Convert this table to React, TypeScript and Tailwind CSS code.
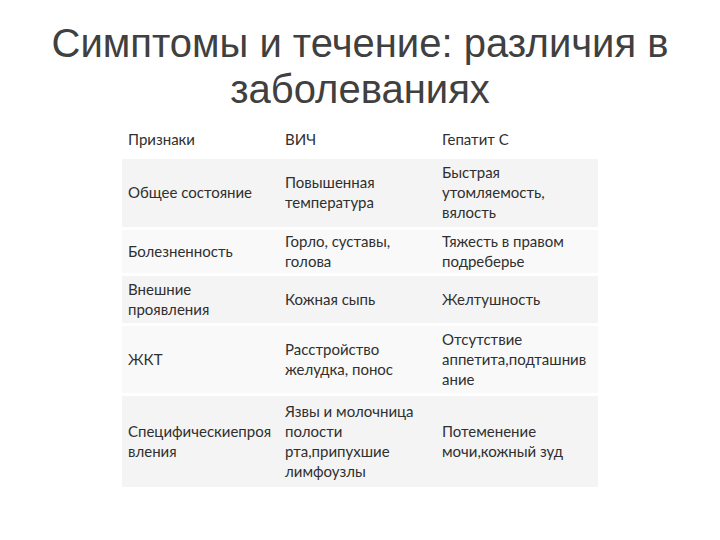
import React from 'react'

const ROWS: { h: string; bg: string; cells: string[][] }[] = [
  { h: 'h-[68px]', bg: 'bg-[#f4f4f4]', cells: [['Общее состояние'], ['Повышенная', 'температура'], ['Быстрая', 'утомляемость,', 'вялость']] },
  { h: 'h-[43px]', bg: 'bg-[#f9f9f9]', cells: [['Болезненность'], ['Горло, суставы,', 'голова'], ['Тяжесть в правом', 'подреберье']] },
  { h: 'h-[47px]', bg: 'bg-[#f4f4f4]', cells: [['Внешние', 'проявления'], ['Кожная сыпь'], ['Желтушность']] },
  { h: 'h-[67px]', bg: 'bg-[#f9f9f9]', cells: [['ЖКТ'], ['Расстройство', 'желудка, понос'], ['Отсутствие', 'аппетита,подташнив', 'ание']] },
  { h: 'h-[91px]', bg: 'bg-[#f4f4f4]', cells: [['Специфическиепроя', 'вления'], ['Язвы и молочница', 'полости', 'рта,припухшие', 'лимфоузлы'], ['Потеменение', 'мочи,кожный зуд']] },
]

function Cell({ lines }: { lines: string[] }) {
  return (
    <div className="flex flex-col justify-center pl-[6px] pb-[2px]">
      {lines.map((l, i) => (
        <span key={i} className="leading-[20px] whitespace-nowrap">
          {l}
        </span>
      ))}
    </div>
  )
}

export default function App() {
  return (
    <div className="w-[720px] h-[540px] bg-white overflow-hidden">
      <h1
        className="pt-[20px] text-center text-[40px] leading-[46px] text-[#404040] font-normal"
        style={{ fontFamily: '"Liberation Sans", Arial, sans-serif' }}
      >
        Симптомы и течение: различия в
        <br />
        заболеваниях
      </h1>
      <div
        className="mt-[12px] ml-[122px] w-[476px] flex flex-col gap-[3px] text-[15px] text-[#2f2f2f]"
        style={{ fontFamily: 'Lato, "Open Sans", sans-serif' }}
      >
        <div className="grid grid-cols-[157px_157px_162px] h-[32px]">
          <Cell lines={['Признаки']} />
          <Cell lines={['ВИЧ']} />
          <Cell lines={['Гепатит С']} />
        </div>
        {ROWS.map((r, i) => (
          <div key={i} className={`grid grid-cols-[157px_157px_162px] ${r.bg} ${r.h}`}>
            {r.cells.map((c, j) => (
              <Cell key={j} lines={c} />
            ))}
          </div>
        ))}
      </div>
    </div>
  )
}
